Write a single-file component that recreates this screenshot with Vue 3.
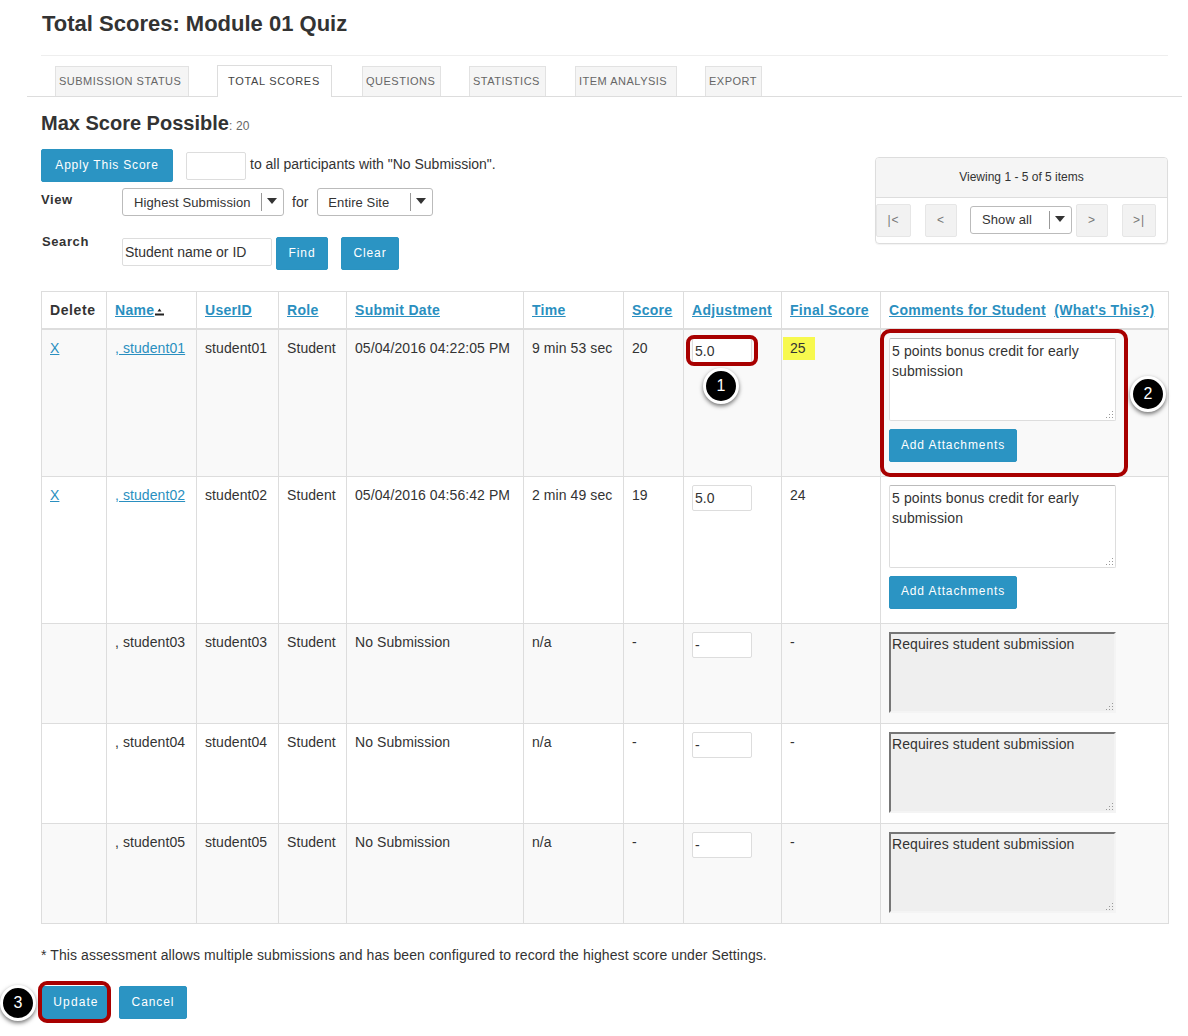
<template>
  <div class="page">
    <h1 class="title">Total Scores: Module 01 Quiz</h1>

    <ul class="tabs">
      <li v-for="tab in tabs" :key="tab.label" class="tab" :class="[tab.cls, { active: tab.active }]">{{ tab.label }}</li>
    </ul>

    <div class="toolbar">
      <div class="filters">
        <h2 class="max-score">Max Score Possible<span class="max-value">: 20</span></h2>
        <div class="apply-row">
          <button class="btn apply-btn">Apply This Score</button>
          <input class="text-input apply-input" type="text" />
          <span class="apply-text">to all participants with "No Submission".</span>
        </div>
        <div class="view-row">
          <label class="field-label">View</label>
          <div class="select view-select"><span>Highest Submission</span><i class="caret"></i></div>
          <span class="for-text">for</span>
          <div class="select site-select"><span>Entire Site</span><i class="caret"></i></div>
        </div>
        <div class="search-row">
          <label class="field-label">Search</label>
          <input class="text-input search-input" type="text" value="Student name or ID" />
          <button class="btn find-btn">Find</button>
          <button class="btn clear-btn">Clear</button>
        </div>
      </div>

      <div class="pager">
        <div class="pager-head">Viewing 1 - 5 of 5 items</div>
        <div class="pager-body">
          <span class="page-btn first">|&lt;</span>
          <span class="page-btn prev">&lt;</span>
          <div class="select pager-select"><span>Show all</span><i class="caret"></i></div>
          <span class="page-btn next">&gt;</span>
          <span class="page-btn last">&gt;|</span>
        </div>
      </div>
    </div>

    <table class="scores">
      <colgroup>
        <col v-for="w in colWidths" :key="w.id" :style="{ width: w.px + 'px' }" />
      </colgroup>
      <thead>
        <tr>
          <th class="plain">Delete</th>
          <th><a>Name</a><svg class="sort" width="9" height="8" viewBox="0 0 9 8"><path d="M4.5 0.5 6.5 3.5H2.5z" fill="#222" /><rect y="5.5" width="9" height="2" fill="#222" /></svg></th>
          <th><a>UserID</a></th>
          <th><a>Role</a></th>
          <th><a>Submit Date</a></th>
          <th><a>Time</a></th>
          <th><a>Score</a></th>
          <th><a>Adjustment</a></th>
          <th><a>Final Score</a></th>
          <th><a>Comments for Student</a>&nbsp;&nbsp;<a>(What's This?)</a></th>
        </tr>
      </thead>
      <tbody>
        <tr v-for="(row, i) in rows" :key="row.id" :class="{ shaded: i % 2 === 0, 'no-sub': !row.submitted, 'has-sub': row.submitted }">
          <td><a v-if="row.submitted">X</a></td>
          <td><a v-if="row.submitted">, {{ row.id }}</a><template v-else>, {{ row.id }}</template></td>
          <td>{{ row.id }}</td>
          <td>Student</td>
          <td>{{ row.date }}</td>
          <td>{{ row.time }}</td>
          <td>{{ row.score }}</td>
          <td class="adj-cell">
            <input class="text-input adj-input" type="text" :value="row.adjustment" />
            <template v-if="i === 0">
              <span class="ring ring-adj"></span>
              <span class="badge badge-1">1</span>
            </template>
          </td>
          <td><span :class="{ highlight: i === 0 }">{{ row.final }}</span></td>
          <td class="comment-cell">
            <div class="comment-box" :class="{ 'box-locked': !row.submitted }">
              <textarea class="comment" :class="{ locked: !row.submitted }" :disabled="!row.submitted" :value="row.comment"></textarea>
              <svg class="grip" width="7" height="7" viewBox="0 0 7 7" fill="#999">
                <rect x="6" y="0" width="1" height="1" />
                <rect x="3" y="3" width="1" height="1" />
                <rect x="6" y="3" width="1" height="1" />
                <rect x="0" y="6" width="1" height="1" />
                <rect x="3" y="6" width="1" height="1" />
                <rect x="6" y="6" width="1" height="1" />
              </svg>
            </div>
            <button v-if="row.submitted" class="btn attach-btn">Add Attachments</button>
            <template v-if="i === 0">
              <span class="ring ring-comment"></span>
              <span class="badge badge-2">2</span>
            </template>
          </td>
        </tr>
      </tbody>
    </table>

    <p class="note">* This assessment allows multiple submissions and has been configured to record the highest score under Settings.</p>

    <div class="actions">
      <button class="btn update-btn">Update</button>
      <button class="btn cancel-btn">Cancel</button>
      <span class="ring ring-update"></span>
      <span class="badge badge-3">3</span>
    </div>
  </div>
</template>

<script setup>
const tabs = [
  { label: 'Submission Status', cls: 'tab-status' },
  { label: 'Total Scores', cls: 'tab-total', active: true },
  { label: 'Questions', cls: 'tab-questions' },
  { label: 'Statistics', cls: 'tab-stats' },
  { label: 'Item Analysis', cls: 'tab-items' },
  { label: 'Export', cls: 'tab-export' }
]

const colWidths = [
  { id: 'delete', px: 65 },
  { id: 'name', px: 90 },
  { id: 'user', px: 82 },
  { id: 'role', px: 68 },
  { id: 'date', px: 177 },
  { id: 'time', px: 100 },
  { id: 'score', px: 60 },
  { id: 'adj', px: 98 },
  { id: 'final', px: 99 },
  { id: 'comments', px: 288 }
]

const bonus = '5 points bonus credit for early submission'
const locked = 'Requires student submission'

const rows = [
  { id: 'student01', submitted: true, date: '05/04/2016 04:22:05 PM', time: '9 min 53 sec', score: '20', adjustment: '5.0', final: '25', comment: bonus },
  { id: 'student02', submitted: true, date: '05/04/2016 04:56:42 PM', time: '2 min 49 sec', score: '19', adjustment: '5.0', final: '24', comment: bonus },
  { id: 'student03', submitted: false, date: 'No Submission', time: 'n/a', score: '-', adjustment: '-', final: '-', comment: locked },
  { id: 'student04', submitted: false, date: 'No Submission', time: 'n/a', score: '-', adjustment: '-', final: '-', comment: locked },
  { id: 'student05', submitted: false, date: 'No Submission', time: 'n/a', score: '-', adjustment: '-', final: '-', comment: locked }
]
</script>

<style>
html, body { background: #fff; }
</style>

<style scoped>
.page {
  width: 1188px;
  height: 1036px;
  box-sizing: border-box;
  padding: 0 20px 0 41px;
  overflow: hidden;
  font-family: "Liberation Sans", Arial, sans-serif;
  font-size: 14px;
  color: #333;
}
.title {
  margin: 0;
  padding: 11px 0 18px 1px;
  height: 56px;
  box-sizing: border-box;
  border-bottom: 1px solid #eee;
  font-size: 22px;
  line-height: 26px;
  font-weight: bold;
  color: #333;
}
.tabs {
  list-style: none;
  display: flex;
  align-items: flex-end;
  height: 41px;
  box-sizing: border-box;
  margin: 0 -14px 0 -14px;
  padding: 0 0 0 28px;
  border-bottom: 1px solid #ddd;
}
.tab {
  box-sizing: border-box;
  height: 30px;
  padding: 0 0 0 3px;
  line-height: 29px;
  font-size: 11px;
  letter-spacing: 0.5px;
  white-space: nowrap;
  text-transform: uppercase;
  color: #666;
  background: #f5f5f5;
  border: 1px solid #e2e2e2;
  border-bottom: 0;
}
.tab.active {
  height: 32px;
  margin-bottom: -1px;
  padding-left: 10px;
  line-height: 31px;
  letter-spacing: 0.7px;
  background: #fff;
  border: 1px solid #ddd;
  border-bottom: 0;
  color: #444;
}
.tab-status { width: 134px; }
.tab-total { width: 115px; margin-left: 28px; }
.tab-questions { width: 79px; margin-left: 30px; }
.tab-stats { width: 77px; margin-left: 28px; }
.tab-items { width: 102px; margin-left: 29px; }
.tab-export { width: 57px; margin-left: 28px; }

.toolbar {
  display: flex;
  justify-content: space-between;
  height: 194px;
}
.filters { width: 600px; }
.max-score {
  margin: 0;
  padding-top: 14px;
  height: 51px;
  box-sizing: border-box;
  font-size: 20px;
  line-height: 24px;
  font-weight: bold;
  color: #333;
}
.max-value {
  font-size: 12px;
  font-weight: normal;
  color: #666;
  letter-spacing: 0.2px;
}
.btn {
  box-sizing: border-box;
  padding: 0 0 2px;
  border: 1px solid #2a93c1;
  border-radius: 2px;
  background: #2b94c3;
  color: #fff;
  font-family: "Liberation Sans", Arial, sans-serif;
  font-size: 12px;
  letter-spacing: 0.9px;
  text-align: center;
}
.text-input {
  box-sizing: border-box;
  padding: 0 2px;
  border: 1px solid #ddd;
  border-radius: 2px;
  background: #fff;
  color: #333;
  font-family: "Liberation Sans", Arial, sans-serif;
  font-size: 14px;
  outline: none;
}
.apply-row {
  display: flex;
  align-items: center;
  height: 33px;
  margin-top: 1px;
}
.apply-btn { width: 132px; height: 33px; letter-spacing: 0.8px; }
.apply-input { width: 60px; height: 28px; margin-left: 13px; }
.apply-text { margin-left: 4px; margin-top: -3px; }
.view-row {
  display: flex;
  align-items: flex-start;
  height: 49px;
  margin-top: 6px;
}
.field-label {
  width: 81px;
  font-weight: bold;
  font-size: 13px;
  line-height: 16px;
  letter-spacing: 0.6px;
  padding-top: 4px;
}
.select {
  box-sizing: border-box;
  position: relative;
  display: flex;
  align-items: center;
  height: 28px;
  padding-left: 11px;
  border: 1px solid #bbb;
  border-radius: 3px;
  background: #fff;
  color: #333;
  font-size: 13px;
  letter-spacing: 0.1px;
}
.caret {
  position: absolute;
  right: 0;
  top: 4px;
  width: 21px;
  height: 18px;
  border-left: 1px solid #999;
}
.caret::after {
  content: "";
  position: absolute;
  left: 5px;
  top: 5px;
  border-left: 5px solid transparent;
  border-right: 5px solid transparent;
  border-top: 6px solid #333;
}
.view-select { width: 162px; }
.site-select { width: 116px; padding-left: 10px; }
.for-text { margin: 6px 9px 0 8px; line-height: 16px; }
.search-row {
  display: flex;
  align-items: flex-start;
  height: 33px;
}
.search-row .field-label { padding-top: 0; margin-top: -3px; padding-left: 1px; width: 80px; }
.search-input { width: 150px; height: 28px; margin-top: 1px; }
.find-btn { width: 52px; height: 33px; margin-left: 4px; }
.clear-btn { width: 58px; height: 33px; margin-left: 13px; }

.pager {
  width: 293px;
  height: 87px;
  box-sizing: border-box;
  margin-top: 60px;
  border: 1px solid #ddd;
  border-radius: 4px;
  box-shadow: 0 1px 1px rgba(0, 0, 0, 0.05);
}
.pager-head {
  height: 40px;
  box-sizing: border-box;
  border-bottom: 1px solid #ddd;
  background: #f5f5f5;
  text-align: center;
  font-size: 12px;
  line-height: 38px;
  border-radius: 3px 3px 0 0;
}
.pager-body {
  display: flex;
  align-items: center;
  height: 45px;
}
.page-btn {
  box-sizing: border-box;
  height: 33px;
  border: 1px solid #e6e6e6;
  border-radius: 2px;
  background: #f2f2f2;
  color: #777;
  font-size: 12px;
  letter-spacing: 1px;
  line-height: 31px;
  text-align: center;
}
.first { width: 35px; }
.prev { width: 32px; margin-left: 14px; }
.pager-select { width: 102px; margin-left: 13px; margin-bottom: 2px; }
.next { width: 32px; margin-left: 4px; }
.last { width: 34px; margin-left: 14px; }

.scores {
  table-layout: fixed;
  width: 1127px;
  border-collapse: collapse;
  font-size: 14px;
}
.scores th,
.scores td {
  border: 1px solid #ddd;
  padding: 8px;
  text-align: left;
  vertical-align: top;
  line-height: 20px;
}
.scores td { letter-spacing: 0.08px; }
.scores th {
  height: 37px;
  box-sizing: border-box;
  border-bottom: 2px solid #ddd;
  font-weight: bold;
  letter-spacing: 0.3px;
  white-space: nowrap;
}
.scores th.plain { letter-spacing: 0.6px; }
.scores a {
  color: #2a8fc0;
  text-decoration: underline;
}
.sort { margin-left: 1px; vertical-align: -1px; }
.shaded td { background: #f9f9f9; }
.has-sub td { height: 147px; box-sizing: border-box; }
.no-sub td { height: 100px; box-sizing: border-box; }
.adj-cell, .comment-cell { position: relative; }
.adj-input {
  display: block;
  width: 60px;
  height: 26px;
  margin-top: 0;
  font-size: 14px;
}
.highlight {
  display: inline-block;
  margin: -1px 0 0 -7px;
  padding: 1px 9px 2px 7px;
  background: #f7f94e;
}
.comment-box {
  position: relative;
  width: 227px;
}
.comment {
  display: block;
  box-sizing: border-box;
  width: 227px;
  height: 83px;
  margin: 0;
  padding: 2px 2px;
  border: 1px solid #ddd;
  border-top-color: #bbb;
  border-radius: 2px;
  background: #fff;
  color: #333;
  font-family: "Liberation Sans", Arial, sans-serif;
  font-size: 14px;
  letter-spacing: 0.1px;
  line-height: 20px;
  outline: none;
  resize: none;
}
.comment.locked {
  height: 81px;
  margin-top: 0;
  padding: 0 1px;
  border-width: 2px;
  border-color: #767676 #f4f4f4 #f4f4f4 #767676;
  border-radius: 0;
  background: #efefef;
}
.grip {
  position: absolute;
  right: 3px;
  bottom: 3px;
}
.attach-btn {
  display: block;
  width: 128px;
  height: 33px;
  margin-top: 8px;
}
.ring {
  position: absolute;
  box-sizing: border-box;
  border: 4px solid #a80000;
  pointer-events: none;
}
.ring-adj {
  left: 2px;
  top: 5px;
  width: 72px;
  height: 31px;
  border-radius: 8px;
}
.ring-comment {
  left: -1px;
  top: -1px;
  width: 248px;
  height: 148px;
  border-radius: 10px;
}
.badge {
  position: absolute;
  box-sizing: border-box;
  width: 36px;
  height: 36px;
  border: 3px solid #fff;
  border-radius: 50%;
  background: #000;
  color: #fff;
  font-size: 16px;
  line-height: 30px;
  text-align: center;
  box-shadow: 0 2px 4px rgba(0, 0, 0, 0.55);
}
.badge-1 { left: 19px; top: 38px; }
.badge-2 { left: 249px; top: 46px; }
.badge-3 { left: -41px; top: -1px; }

.note {
  margin: 23px 0 0;
  line-height: 16px;
  font-size: 14px;
  letter-spacing: 0.09px;
}
.actions {
  position: relative;
  display: flex;
  gap: 12px;
  margin-top: 23px;
}
.update-btn { width: 66px; height: 33px; padding: 0 0 0 4px; letter-spacing: 1.1px; }
.cancel-btn { width: 68px; height: 33px; padding: 0; }
.ring-update {
  left: -3px;
  top: -5px;
  width: 73px;
  height: 42px;
  border-radius: 9px;
}
</style>
